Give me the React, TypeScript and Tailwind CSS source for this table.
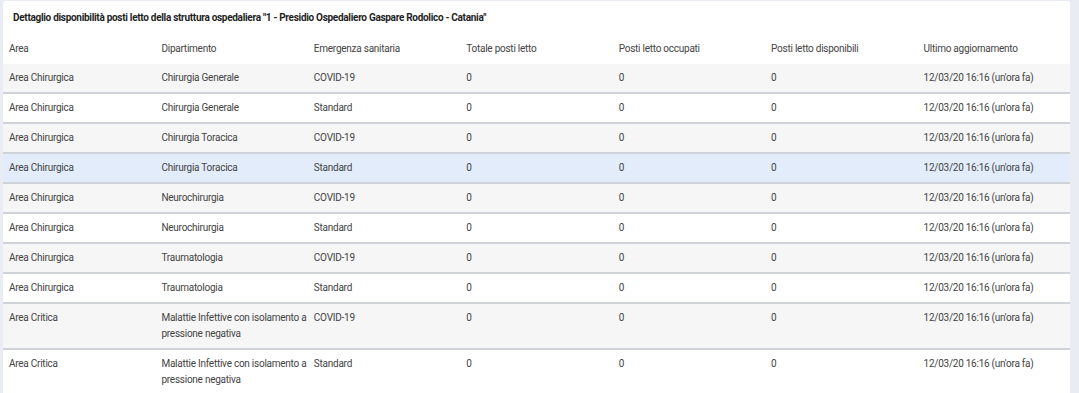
const rows: { area: string; dip: string; em: string; hl?: boolean }[] = [
  { area: 'Area Chirurgica', dip: 'Chirurgia Generale', em: 'COVID-19' },
  { area: 'Area Chirurgica', dip: 'Chirurgia Generale', em: 'Standard' },
  { area: 'Area Chirurgica', dip: 'Chirurgia Toracica', em: 'COVID-19' },
  { area: 'Area Chirurgica', dip: 'Chirurgia Toracica', em: 'Standard', hl: true },
  { area: 'Area Chirurgica', dip: 'Neurochirurgia', em: 'COVID-19' },
  { area: 'Area Chirurgica', dip: 'Neurochirurgia', em: 'Standard' },
  { area: 'Area Chirurgica', dip: 'Traumatologia', em: 'COVID-19' },
  { area: 'Area Chirurgica', dip: 'Traumatologia', em: 'Standard' },
  { area: 'Area Critica', dip: 'Malattie Infettive con isolamento a pressione negativa', em: 'COVID-19' },
  { area: 'Area Critica', dip: 'Malattie Infettive con isolamento a pressione negativa', em: 'Standard' },
];

const headers = [
  'Area',
  'Dipartimento',
  'Emergenza sanitaria',
  'Totale posti letto',
  'Posti letto occupati',
  'Posti letto disponibili',
  'Ultimo aggiornamento',
];

export default function App() {
  return (
    <div className="min-h-[393px] bg-[#e9edf3] pl-[3px] pt-[1px] font-['Roboto',sans-serif] text-[10px] tracking-[-0.25px] text-[#444]">
      <div className="w-[1067px] rounded-[3px] bg-white pb-2">
        <div className="px-[10px] pt-[10px] pb-[10px] text-[10px] font-bold leading-[14px] tracking-[-0.3px] text-[#1e1e1e]">
          Dettaglio disponibilità posti letto della struttura ospedaliera "1 - Presidio Ospedaliero Gaspare Rodolico - Catania"
        </div>
        <table className="w-full table-fixed border-collapse">
          <thead>
            <tr>
              {headers.map(h => (
                <th key={h} className="px-[6px] pt-[6px] pb-[7px] text-left font-normal leading-[16px]">
                  {h}
                </th>
              ))}
            </tr>
          </thead>
          <tbody>
            {rows.map((r, i) => (
              <tr
                key={i}
                className={`border-b-2 border-[#cfd3d8] ${r.hl ? 'bg-[#e2ecfa]' : i % 2 === 0 ? 'bg-[#f6f6f6]' : 'bg-white'}`}
              >
                <td className="px-[6px] py-[6px] align-top leading-[16px]">{r.area}</td>
                <td className="pl-[6px] pr-0 py-[6px] align-top leading-[16px]">{r.dip}</td>
                <td className="px-[6px] py-[6px] align-top leading-[16px]">{r.em}</td>
                <td className="px-[6px] py-[6px] align-top leading-[16px]">0</td>
                <td className="px-[6px] py-[6px] align-top leading-[16px]">0</td>
                <td className="px-[6px] py-[6px] align-top leading-[16px]">0</td>
                <td className="px-[6px] py-[6px] align-top leading-[16px]">12/03/20 16:16 (un'ora fa)</td>
              </tr>
            ))}
          </tbody>
        </table>
      </div>
    </div>
  );
}
